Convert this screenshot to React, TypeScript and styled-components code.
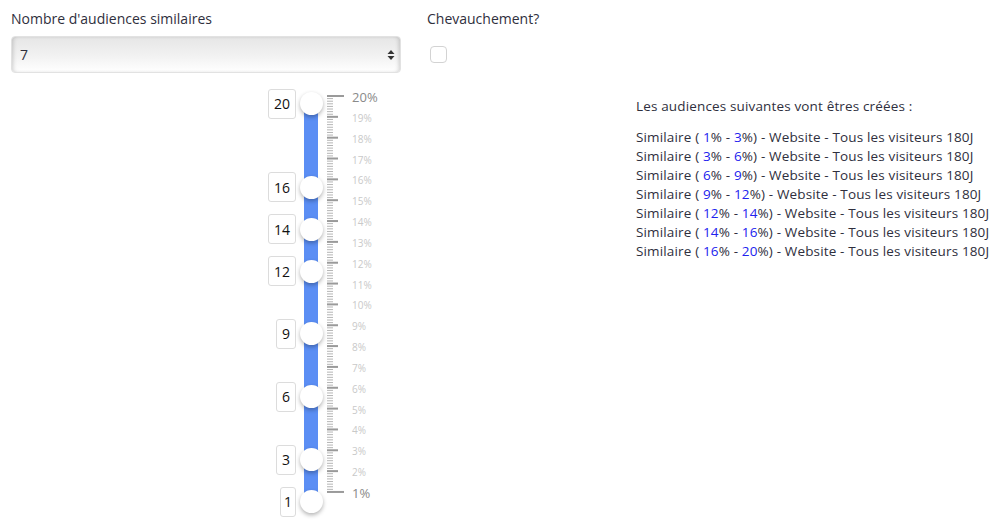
import React from 'react';
import styled, { createGlobalStyle } from 'styled-components';

const GlobalStyle = createGlobalStyle`
  body {
    margin: 0;
    background: #fff;
    font-family: 'Open Sans', 'Liberation Sans', sans-serif;
    color: #2f2f3d;
  }
`;

const TOP_TICK = 11;
const TICK_STEP = 20.84;
const THUMB_TOP = 18.5;
const THUMB_STEP = 20.95;
const TRACK_X = 51;

const Page = styled.div`
  width: 1000px;
  height: 528px;
  overflow: hidden;
`;

const TopRow = styled.div`
  display: grid;
  grid-template-columns: 390px 1fr;
  column-gap: 26px;
  padding: 9px 0 0 11px;
`;

const Field = styled.div`
  display: flex;
  flex-direction: column;
  gap: ${(p: { $gap: number }) => p.$gap}px;
`;

const Label = styled.div`
  font-size: 14px;
  line-height: 20px;
  color: #2f2f3d;
`;

const SelectWrap = styled.div`
  position: relative;
  height: 37px;
`;

const Select = styled.select`
  appearance: none;
  width: 100%;
  height: 37px;
  padding: 0 8px;
  border: 1px solid #e2e2e2;
  border-radius: 4px;
  background: linear-gradient(#e6e6e6, #f2f2f2 55%, #ffffff);
  box-shadow: inset 3px 0 4px -2px rgba(0, 0, 0, 0.18), inset -3px 0 4px -2px rgba(0, 0, 0, 0.18);
  font-family: inherit;
  font-size: 14px;
  color: #2f2f3d;
  outline: none;
`;

const SelectArrows = styled.svg`
  position: absolute;
  right: 6px;
  top: 13px;
  pointer-events: none;
`;

const Checkbox = styled.div`
  width: 15px;
  height: 15px;
  margin-left: 3px;
  border: 1px solid #d3d3d3;
  border-radius: 4px;
  background: #fff;
`;

const BottomRow = styled.div`
  display: flex;
  gap: 236px;
  padding: 12px 0 0 260px;
`;

const SliderArea = styled.div`
  position: relative;
  width: 140px;
  height: 435px;
  flex-shrink: 0;
`;

const Track = styled.div`
  position: absolute;
  left: ${TRACK_X - 7}px;
  top: ${THUMB_TOP}px;
  width: 14px;
  height: ${THUMB_STEP * 19}px;
  background: #5b8ef4;
  border-radius: 7px;
`;

const Thumb = styled.div`
  position: absolute;
  left: ${TRACK_X - 11.5}px;
  width: 23px;
  height: 23px;
  margin-top: -11.5px;
  border-radius: 50%;
  background: #fff;
  box-shadow: 0 2px 4px rgba(0, 0, 0, 0.3);
`;

const ValueBox = styled.div`
  position: absolute;
  left: 36px;
  transform: translate(-100%, -50%);
  height: 30px;
  box-sizing: border-box;
  padding: 0 ${(p: { $narrow: boolean }) => (p.$narrow ? 3 : 5)}px;
  display: flex;
  align-items: center;
  border: 1px solid #dcdcdc;
  border-radius: 3px;
  background: #fff;
  font-size: 14px;
  color: #111;
`;

const Ticks = styled.svg`
  position: absolute;
  left: 67px;
  top: 0;
`;

const ScaleLabel = styled.span<{ $end: boolean }>`
  position: absolute;
  left: 92px;
  transform: translateY(-50%);
  font-size: ${(p) => (p.$end ? 13 : 10)}px;
  line-height: 1;
  color: ${(p) => (p.$end ? '#8a8a8a' : '#c9c9c9')};
`;

const List = styled.div`
  padding-top: 12px;
  font-size: 13.5px;
  letter-spacing: 0.15px;
  line-height: 19px;
  color: #2f2f3d;
  white-space: nowrap;
`;

const ListTitle = styled.div`
  margin-bottom: 12px;
`;

const Pct = styled.span`
  color: #2222ee;
`;

const handles = [20, 16, 14, 12, 9, 6, 3, 1];
const ranges: [number, number][] = [
  [1, 3], [3, 6], [6, 9], [9, 12], [12, 14], [14, 16], [16, 20],
];

const TickMarks: React.FC = () => {
  const lines: React.ReactNode[] = [];
  const sub = 8;
  for (let i = 0; i <= 19 * sub; i++) {
    const y = TOP_TICK + (i * TICK_STEP) / sub;
    const major = i % sub === 0;
    const end = i === 0 || i === 19 * sub;
    lines.push(
      <line
        key={i}
        x1={0}
        x2={end ? 17 : major ? 11 : 6}
        y1={y}
        y2={y}
        stroke={major ? '#9a9a9a' : '#b5b5b5'}
        strokeWidth={major ? 2 : 1}
      />
    );
  }
  return (
    <Ticks width="20" height="435">
      {lines}
    </Ticks>
  );
};

const App: React.FC = () => {
  return (
    <Page>
      <GlobalStyle />
      <TopRow>
        <Field $gap={7}>
          <Label>Nombre d'audiences similaires</Label>
          <SelectWrap>
            <Select defaultValue="7">
              {[1, 2, 3, 4, 5, 6, 7, 8, 9, 10].map((n) => (
                <option key={n} value={n}>{n}</option>
              ))}
            </Select>
            <SelectArrows width="8" height="12" viewBox="0 0 8 12">
              <path d="M4 1 L7.5 5 L0.5 5 Z M4 11 L7.5 7 L0.5 7 Z" fill="#333" />
            </SelectArrows>
          </SelectWrap>
        </Field>
        <Field $gap={17}>
          <Label>Chevauchement?</Label>
          <Checkbox />
        </Field>
      </TopRow>
      <BottomRow>
        <SliderArea>
          <TickMarks />
          {Array.from({ length: 20 }, (_, k) => 20 - k).map((v) => (
            <ScaleLabel
              key={v}
              $end={v === 20 || v === 1}
              style={{ top: TOP_TICK + (20 - v) * TICK_STEP + 1 }}
            >
              {v}%
            </ScaleLabel>
          ))}
          <Track />
          {handles.map((v) => {
            const y = THUMB_TOP + (20 - v) * THUMB_STEP;
            return (
              <React.Fragment key={v}>
                <ValueBox $narrow={v === 1} style={{ top: y }}>{v}</ValueBox>
                <Thumb style={{ top: y }} />
              </React.Fragment>
            );
          })}
        </SliderArea>
        <List>
          <ListTitle>Les audiences suivantes vont êtres créées :</ListTitle>
          {ranges.map(([a, b]) => (
            <div key={a}>
              Similaire ( <Pct>{a}</Pct>% - <Pct>{b}</Pct>%) - Website - Tous les visiteurs 180J
            </div>
          ))}
        </List>
      </BottomRow>
    </Page>
  );
};

export default App;
